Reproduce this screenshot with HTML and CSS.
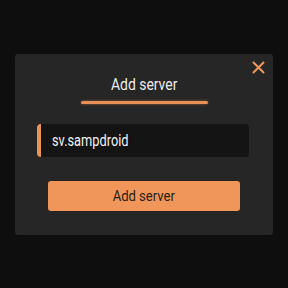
FILE: index.html
```html
<!DOCTYPE html>
<html>
<head>
<meta charset="utf-8">
<link rel="stylesheet" href="styles.css">
</head>
<body>
<div class="dialog">
  <button class="close" aria-label="Close">
    <svg width="13" height="13" viewBox="0 0 13 13"><path d="M1.5 1.5 L11.5 11.5 M11.5 1.5 L1.5 11.5" stroke="#f0965a" stroke-width="2" stroke-linecap="round"/></svg>
  </button>
  <div class="title"><span class="narrow">Add server</span></div>
  <div class="underline"></div>
  <div class="input"><span class="narrow left">sv.sampdroid</span></div>
  <div class="btn"><span class="narrow">Add server</span></div>
</div>
</body>
</html>
```
FILE: styles.css
```css
html, body {
  margin: 0;
  padding: 0;
  background: #0e0e0e;
  width: 288px;
  height: 288px;
  overflow: hidden;
  font-family: Roboto, "Noto Sans", sans-serif;
}
.dialog {
  position: relative;
  margin: 54px 0 0 15px;
  width: 258px;
  height: 181px;
  box-sizing: border-box;
  background: #262626;
  border-radius: 3px;
  display: flex;
  flex-direction: column;
  align-items: center;
  padding-top: 21px;
}
.close {
  position: absolute;
  top: 7px;
  right: 8px;
  width: 13px;
  height: 13px;
  padding: 0;
  border: 0;
  background: none;
  display: flex;
}
.narrow {
  display: inline-block;
  transform: scaleX(0.87);
  transform-origin: center;
}
.narrow.left {
  transform: scaleX(0.8);
  transform-origin: left center;
}
.title {
  color: #ececec;
  font-size: 16px;
  line-height: 20px;
  height: 20px;
}
.underline {
  margin-top: 6px;
  width: 127px;
  height: 3px;
  border-radius: 2px;
  background: #e89058;
  box-shadow: 0 0 3px rgba(240, 150, 90, 0.5);
}
.input {
  margin-top: 20px;
  align-self: flex-start;
  margin-left: 22px;
  width: 212px;
  height: 33px;
  box-sizing: border-box;
  background: #141414;
  border-left: 4px solid #e8955a;
  border-radius: 4px;
  color: #f2f2f2;
  font-size: 16px;
  line-height: 33px;
  padding-left: 11px;
}
.btn {
  margin-top: 24px;
  width: 192px;
  height: 30px;
  background: #f0965a;
  border-radius: 3px;
  color: #2a1e16;
  font-size: 15px;
  line-height: 30px;
  text-align: center;
}
```
